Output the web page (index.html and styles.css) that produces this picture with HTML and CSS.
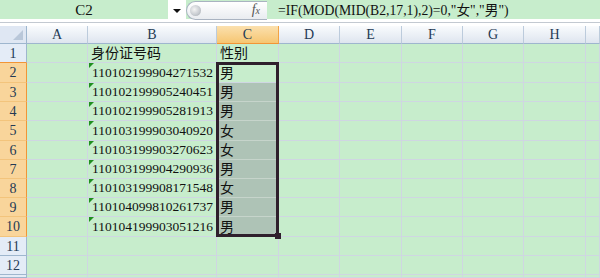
FILE: index.html
```html
<!DOCTYPE html>
<html>
  <head>
    <meta charset="UTF-8">
    <title>身份证性别</title>
    <link rel="stylesheet" href="styles.css">
  </head>
  <body>
    <div class="formula-bar">
      <div class="name-box">C2</div>
      <div class="name-drop"><span class="arrow"></span></div>
      <div class="fx-pill"><span class="knob"></span><span class="fx">f<span class="fx-x">x</span></span></div>
      <div class="formula">=IF(MOD(MID(B2,17,1),2)=0,"女","男")</div>
    </div>
    <div class="bar-gap"></div>

    <div class="sheet">
      <div class="corner"></div>
      <div class="h">A</div><div class="h">B</div><div class="h h-sel">C</div><div class="h">D</div>
      <div class="h">E</div><div class="h">F</div><div class="h">G</div><div class="h">H</div><div class="h"></div>

      <div class="rh rh-top">1</div>
      <div class="c"></div><div class="c cjk">身份证号码</div><div class="c cjk">性别</div>
      <div class="c"></div><div class="c"></div><div class="c"></div><div class="c"></div><div class="c"></div><div class="c"></div>

      <div class="rh rh-sel">2</div>
      <div class="c"></div><div class="c num">110102199904271532</div>
      <div class="c cjk active">男<div class="selection"><span class="handle"></span></div></div>
      <div class="c"></div><div class="c"></div><div class="c"></div><div class="c"></div><div class="c"></div><div class="c"></div>

      <div class="rh rh-sel">3</div>
      <div class="c"></div><div class="c num">110102199905240451</div><div class="c cjk sel">男</div>
      <div class="c"></div><div class="c"></div><div class="c"></div><div class="c"></div><div class="c"></div><div class="c"></div>

      <div class="rh rh-sel">4</div>
      <div class="c"></div><div class="c num">110102199905281913</div><div class="c cjk sel">男</div>
      <div class="c"></div><div class="c"></div><div class="c"></div><div class="c"></div><div class="c"></div><div class="c"></div>

      <div class="rh rh-sel">5</div>
      <div class="c"></div><div class="c num">110103199903040920</div><div class="c cjk sel">女</div>
      <div class="c"></div><div class="c"></div><div class="c"></div><div class="c"></div><div class="c"></div><div class="c"></div>

      <div class="rh rh-sel">6</div>
      <div class="c"></div><div class="c num">110103199903270623</div><div class="c cjk sel">女</div>
      <div class="c"></div><div class="c"></div><div class="c"></div><div class="c"></div><div class="c"></div><div class="c"></div>

      <div class="rh rh-sel">7</div>
      <div class="c"></div><div class="c num">110103199904290936</div><div class="c cjk sel">男</div>
      <div class="c"></div><div class="c"></div><div class="c"></div><div class="c"></div><div class="c"></div><div class="c"></div>

      <div class="rh rh-sel">8</div>
      <div class="c"></div><div class="c num">110103199908171548</div><div class="c cjk sel">女</div>
      <div class="c"></div><div class="c"></div><div class="c"></div><div class="c"></div><div class="c"></div><div class="c"></div>

      <div class="rh rh-sel">9</div>
      <div class="c"></div><div class="c num">110104099810261737</div><div class="c cjk sel">男</div>
      <div class="c"></div><div class="c"></div><div class="c"></div><div class="c"></div><div class="c"></div><div class="c"></div>

      <div class="rh rh-sel">10</div>
      <div class="c"></div><div class="c num">110104199903051216</div><div class="c cjk sel">男</div>
      <div class="c"></div><div class="c"></div><div class="c"></div><div class="c"></div><div class="c"></div><div class="c"></div>

      <div class="rh">11</div>
      <div class="c"></div><div class="c"></div><div class="c"></div>
      <div class="c"></div><div class="c"></div><div class="c"></div><div class="c"></div><div class="c"></div><div class="c"></div>

      <div class="rh">12</div>
      <div class="c"></div><div class="c"></div><div class="c"></div>
      <div class="c"></div><div class="c"></div><div class="c"></div><div class="c"></div><div class="c"></div><div class="c"></div>

      <div class="rh"></div>
      <div class="c"></div><div class="c"></div><div class="c"></div>
      <div class="c"></div><div class="c"></div><div class="c"></div><div class="c"></div><div class="c"></div><div class="c"></div>
    </div>
  </body>
</html>
```

FILE: styles.css
```css
body {
  margin: 0;
  width: 600px;
  height: 278px;
  overflow: hidden;
  background-color: #c7edcc;
  font-family: "Liberation Serif", "Noto Sans CJK SC", serif;
}

/* formula bar */
.formula-bar {
  display: flex;
  height: 19px;
  background-color: #c7edcc;
}

.name-box {
  width: 168px;
  text-align: center;
  font-size: 15px;
  line-height: 21px;
  color: #111;
}

.name-drop {
  width: 18px;
  background-color: #fff;
  display: flex;
  align-items: center;
  justify-content: center;
}

.arrow {
  width: 0;
  height: 0;
  border-left: 4px solid transparent;
  border-right: 4px solid transparent;
  border-top: 4px solid #111;
  margin-top: 2px;
}

.fx-pill {
  width: 81px;
  box-sizing: border-box;
  margin-top: 1px;
  height: 19px;
  border: 1px solid #a9b3c1;
  border-right: none;
  border-radius: 10px 0 0 10px;
  background: linear-gradient(#ffffff, #e9ecf0);
  display: flex;
  align-items: center;
  justify-content: space-between;
  padding: 0 7px 0 3px;
}

.knob {
  width: 11px;
  height: 11px;
  border-radius: 50%;
  background: radial-gradient(circle at 40% 40%, #f4f4f4 0, #c9cdd2 55%, #9ea4ab 100%);
}

.fx {
  font-style: italic;
  font-size: 14px;
  color: #555;
  line-height: 14px;
}

.fx-x {
  font-size: 10px;
}

.formula {
  padding-left: 11px;
  font-size: 13.7px;
  line-height: 21px;
  color: #111;
  white-space: nowrap;
}

.bar-gap {
  height: 7px;
  box-sizing: border-box;
  background-color: #fff;
  border-top: 3px solid #fff;
}

.bar-gap::before {
  content: "";
  display: block;
  height: 1px;
  background-color: #c3c9d1;
}

/* grid */
.sheet {
  display: grid;
  grid-template-columns: 27px 61px 129px 62px 61px 62px 61px 61px 62px 1fr;
  grid-template-rows: 18px 19px 20px 19px 19px 20px 19px 19px 19px 19px 20px 19px 19px 1fr;
  height: 252px;
}

.corner {
  background-color: #dfe7f3;
  border-right: 1px solid #9eb6ce;
  border-bottom: 1px solid #9eb6ce;
  box-sizing: border-box;
  position: relative;
}

.corner::after {
  content: "";
  position: absolute;
  right: 3px;
  bottom: 3px;
  border-left: 10px solid transparent;
  border-bottom: 10px solid #b9c7d9;
}

.h {
  box-sizing: border-box;
  background: linear-gradient(#f9fbfd, #dee5ef);
  border-right: 1px solid #bccbdc;
  border-bottom: 1px solid #9eb6ce;
  text-align: center;
  font-size: 14px;
  line-height: 18px;
  color: #243a55;
}

.h-sel {
  background: linear-gradient(#fbe0ae, #f6c672);
  border-right-color: #f2a345;
  border-bottom-color: #f29536;
}

.rh {
  box-sizing: border-box;
  background-color: #e4ecf7;
  border-right: 1px solid #9eb6ce;
  border-bottom: 1px solid #9eb6ce;
  text-align: center;
  font-size: 14px;
  line-height: 19px;
  color: #243a55;
}

.rh-top {
  border-bottom-color: #f29536;
}

.rh-sel {
  background-color: #f9d59b;
  border-right-color: #f29536;
  border-bottom-color: #f3c47c;
}

.c {
  box-sizing: border-box;
  border-right: 1px solid #cfd6e2;
  border-bottom: 1px solid #cfd6e2;
  display: flex;
  align-items: flex-end;
  padding: 0 0 1px 3px;
  white-space: nowrap;
  color: #111;
  position: relative;
}

.num {
  font-size: 13.5px;
  line-height: 17px;
  padding-left: 4px;
}

.num::before {
  content: "";
  position: absolute;
  top: 0;
  left: 1px;
  border-top: 5px solid #1f8f1f;
  border-right: 5px solid transparent;
}

.cjk {
  font-family: "Noto Sans CJK SC", sans-serif;
  font-size: 14px;
  line-height: 17px;
}

.sel {
  background-color: #aec3b6;
  border-bottom-color: #c6d4cb;
}

/* selection frame C2:C10 */
.selection {
  position: absolute;
  top: -1px;
  left: -1px;
  width: 63px;
  height: 175px;
  box-sizing: border-box;
  border: 3px solid #2f1f2c;
  z-index: 2;
}

.handle {
  position: absolute;
  right: -5px;
  bottom: -5px;
  width: 6px;
  height: 6px;
  background-color: #2f1f2c;
}
```
